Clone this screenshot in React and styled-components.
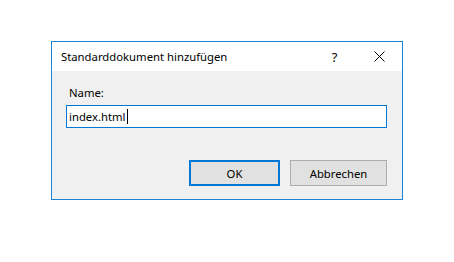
import React from "react";
import styled, { createGlobalStyle } from "styled-components";

const GlobalStyle = createGlobalStyle`
  body {
    margin: 0;
    background: #ffffff;
    font-family: "Noto Sans", "Open Sans", sans-serif;
  }
`;

const Page = styled.div`
  padding: 41px 0 0 51px;
`;

const Dialog = styled.div`
  box-sizing: border-box;
  width: 352px;
  height: 159px;
  border: 1px solid #1883d7;
  display: flex;
  flex-direction: column;
  background: #f0f0f0;
`;

const TitleBar = styled.div`
  height: 29px;
  background: #ffffff;
  display: flex;
  align-items: center;
`;

const Title = styled.div`
  flex-grow: 1;
  padding-left: 9px;
  font-size: 11.3px;
  color: #000000;
`;

const CaptionButton = styled.div`
  width: 45px;
  height: 29px;
  display: flex;
  align-items: center;
  justify-content: center;
  font-size: 13px;
  color: #000000;
`;

const Body = styled.div`
  flex-grow: 1;
  padding: 14px 15px 0 14px;
  display: flex;
  flex-direction: column;
`;

const Label = styled.div`
  margin-left: 3px;
  font-size: 11.3px;
  line-height: 16px;
  color: #000000;
`;

const TextBox = styled.div`
  box-sizing: border-box;
  margin-top: 4px;
  height: 23px;
  border: 1px solid #0078d7;
  background: #ffffff;
  display: flex;
  align-items: center;
  padding-left: 2px;
  font-size: 11.3px;
  color: #000000;
`;

const Caret = styled.span`
  display: inline-block;
  width: 1px;
  height: 15px;
  margin-left: 1px;
  background: #000000;
`;

const ButtonRow = styled.div`
  display: flex;
  justify-content: flex-end;
  gap: 10px;
  margin-top: 32px;
`;

const Button = styled.button`
  box-sizing: border-box;
  width: ${(p) => p.$width}px;
  height: 26px;
  padding: 0;
  font-family: inherit;
  font-size: 11.3px;
  color: #000000;
  background: #e1e1e1;
  border: ${(p) => (p.$default ? "2px solid #0078d7" : "1px solid #adadad")};
`;

const CloseIcon = () => (
  <svg width="11" height="11" viewBox="0 0 11 11">
    <path d="M0.5 0.5 L10.5 10.5 M10.5 0.5 L0.5 10.5" stroke="#000" strokeWidth="1" />
  </svg>
);

export default function App() {
  return (
    <Page>
      <GlobalStyle />
      <Dialog>
        <TitleBar>
          <Title>Standarddokument hinzufügen</Title>
          <CaptionButton>?</CaptionButton>
          <CaptionButton>
            <CloseIcon />
          </CaptionButton>
        </TitleBar>
        <Body>
          <Label>Name:</Label>
          <TextBox>
            index.html
            <Caret />
          </TextBox>
          <ButtonRow>
            <Button $default $width={91}>OK</Button>
            <Button $width={97}>Abbrechen</Button>
          </ButtonRow>
        </Body>
      </Dialog>
    </Page>
  );
}
